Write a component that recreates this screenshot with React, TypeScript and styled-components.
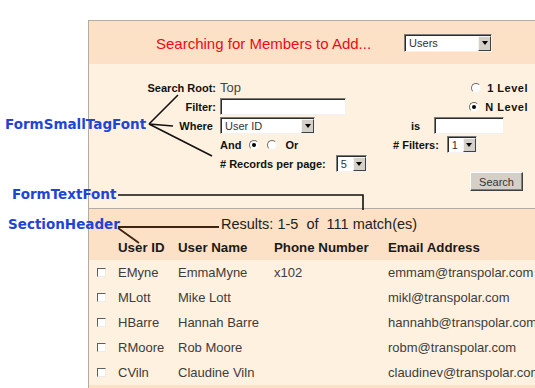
import styled, { createGlobalStyle } from 'styled-components'

const GlobalStyle = createGlobalStyle`
  html, body {
    margin: 0;
    padding: 0;
    background: #fff;
  }
  body {
    font-family: 'Liberation Sans', Arial, sans-serif;
  }
`

const Page = styled.div`
  position: relative;
  width: 535px;
  height: 388px;
  overflow: hidden;
  box-sizing: border-box;
  padding: 20px 0 0 88px;
`

const Panel = styled.div`
  width: 470px;
  border-top: 1px solid #b3aca4;
  border-left: 1px solid #b3aca4;
  background: #fff1df;
`

const TitleBar = styled.div`
  height: 43px;
  display: flex;
  align-items: center;
  gap: 33px;
  padding-left: 67px;
  background: #fde1c6;
`

const Title = styled.span`
  font-size: 15px;
  line-height: 18px;
  color: #ee0a14;
  padding-top: 2px;
`

const FormArea = styled.div`
  display: grid;
  grid-template-columns: 127px 166px 138px;
  grid-auto-rows: 17px;
  column-gap: 4px;
  row-gap: 2px;
  padding: 15px 0 17px;
  border-bottom: 1px solid #b3aca4;
`

const Label = styled.span`
  display: flex;
  align-items: center;
  justify-content: flex-end;
  font-size: 11px;
  font-weight: bold;
  color: #111;
  white-space: pre;
`

const Tag = styled.span<{ $spaced?: boolean }>`
  font-size: 11px;
  font-weight: bold;
  color: #111;
  letter-spacing: ${({ $spaced }) => ($spaced ? '0.5px' : '0')};
  white-space: nowrap;
`

const Cell = styled.div<{ $gap?: number; $col?: number }>`
  display: flex;
  align-items: center;
  gap: ${({ $gap }) => $gap ?? 0}px;
  grid-column: ${({ $col }) => $col ?? 'auto'};
`

const Side = styled.div<{ $indent?: number; $gap?: number; $end?: boolean; $row?: number }>`
  grid-column: 3;
  grid-row: ${({ $row }) => $row ?? 'auto'};
  display: flex;
  align-items: center;
  justify-content: ${({ $end }) => ($end ? 'flex-end' : 'flex-start')};
  gap: ${({ $gap }) => $gap ?? 6}px;
  padding-left: ${({ $indent }) => $indent ?? 0}px;
`

const Plain = styled.span`
  font-size: 13px;
  color: #444;
`

const TextBox = styled.div<{ $w: number }>`
  width: ${({ $w }) => $w}px;
  height: 17px;
  box-sizing: border-box;
  background: #fff;
  border: 1px solid;
  border-color: #7c7c7c #f2f2f2 #f2f2f2 #7c7c7c;
  box-shadow: inset 1px 1px 0 #2c2c2c;
`

const SelectBox = styled.div<{ $w: number; $h?: number }>`
  width: ${({ $w }) => $w}px;
  height: ${({ $h }) => $h ?? 17}px;
  box-sizing: border-box;
  display: flex;
  padding: 1px 0 0 1px;
  background: #fff;
  border: 1px solid;
  border-color: #7c7c7c #f2f2f2 #f2f2f2 #7c7c7c;
  box-shadow: inset 1px 1px 0 #2c2c2c;
`

const SelectValue = styled.span`
  flex: 1;
  display: flex;
  align-items: center;
  padding-left: 3px;
  font-size: 11px;
  color: #333;
`

const DropButton = styled.span`
  width: 13px;
  box-sizing: border-box;
  display: flex;
  align-items: center;
  justify-content: center;
  background: #d4d0c8;
  border: 1px solid;
  border-color: #f4f4f4 #404040 #404040 #f4f4f4;

  &::after {
    content: '';
    border-left: 3.5px solid transparent;
    border-right: 3.5px solid transparent;
    border-top: 4px solid #000;
  }
`

const Radio = styled.span<{ $checked?: boolean }>`
  width: 10px;
  height: 10px;
  box-sizing: border-box;
  border-radius: 50%;
  background: #fff;
  border: 1px solid;
  border-color: #6e6e6e #f4f4f4 #f4f4f4 #6e6e6e;
  display: flex;
  align-items: center;
  justify-content: center;
  flex-shrink: 0;

  &::after {
    content: '';
    width: 4px;
    height: 4px;
    border-radius: 50%;
    background: ${({ $checked }) => ($checked ? '#000' : 'transparent')};
  }
`

const SearchButton = styled.button`
  width: 53px;
  height: 19px;
  margin: -2px 5px 0 0;
  padding: 0;
  background: #d4d0c8;
  border: 1px solid;
  border-color: #fff #404040 #404040 #fff;
  box-shadow: inset -1px -1px 0 #808080;
  font-family: 'Liberation Sans', Arial, sans-serif;
  font-size: 11px;
  color: #333;
`

const ResultsHead = styled.div`
  background: #fde1c6;
  padding: 7px 0 5px;
`

const Summary = styled.div`
  padding-left: 132px;
  font-size: 14.5px;
  line-height: 17px;
  color: #222;
  white-space: pre;
`

const Row = styled.div<{ $head?: boolean }>`
  display: grid;
  grid-template-columns: 21px 60px 96px 114px 1fr;
  align-items: center;
  padding-left: 8px;
  height: ${({ $head }) => ($head ? 16 : 25)}px;
  margin-top: ${({ $head }) => ($head ? 6 : 0)}px;
  font-size: ${({ $head }) => ($head ? 13.3 : 13)}px;
  font-weight: ${({ $head }) => ($head ? 'bold' : 'normal')};
  color: ${({ $head }) => ($head ? '#1a1a1a' : '#3c3c3c')};
  white-space: nowrap;
`

const Check = styled.span`
  width: 9px;
  height: 9px;
  box-sizing: border-box;
  background: #fff;
  border: 1px solid;
  border-color: #5e5e5e #ececec #ececec #5e5e5e;
`

const Footer = styled.div`
  height: 12px;
  background: #fde1c6;
`

const Callout = styled.div<{ $x: number; $y: number }>`
  position: absolute;
  left: ${({ $x }) => $x}px;
  top: ${({ $y }) => $y}px;
  font-family: 'DejaVu Sans', Verdana, sans-serif;
  font-weight: bold;
  font-size: 13.5px;
  line-height: 16px;
  color: #1f45d6;
  white-space: nowrap;
`

const Leaders = styled.svg`
  position: absolute;
  left: 0;
  top: 0;
  pointer-events: none;
`

type Member = { id: string; name: string; phone: string; email: string }

const members: Member[] = [
  { id: 'EMyne', name: 'EmmaMyne', phone: 'x102', email: 'emmam@transpolar.com' },
  { id: 'MLott', name: 'Mike Lott', phone: '', email: 'mikl@transpolar.com' },
  { id: 'HBarre', name: 'Hannah Barre', phone: '', email: 'hannahb@transpolar.com' },
  { id: 'RMoore', name: 'Rob Moore', phone: '', email: 'robm@transpolar.com' },
  { id: 'CViln', name: 'Claudine Viln', phone: '', email: 'claudinev@transpolar.com' },
]

function Select({ value, w, h }: { value: string; w: number; h?: number }) {
  return (
    <SelectBox $w={w} $h={h}>
      <SelectValue>{value}</SelectValue>
      <DropButton />
    </SelectBox>
  )
}

export default function App() {
  return (
    <>
      <GlobalStyle />
      <Page>
        <Panel>
          <TitleBar>
            <Title>Searching for Members to Add...</Title>
            <Select value='Users' w={88} h={18} />
          </TitleBar>

          <FormArea>
            <Label>Search Root:</Label>
            <Cell>
              <Plain>Top</Plain>
            </Cell>
            <Side $end>
              <Radio />
              <Tag $spaced>1 Level</Tag>
            </Side>

            <Label>Filter:</Label>
            <Cell>
              <TextBox $w={126} />
            </Cell>
            <Side $end>
              <Radio $checked />
              <Tag $spaced>N Level</Tag>
            </Side>

            <Label>{'Where\u00a0'}</Label>
            <Cell>
              <Select value='User ID' w={95} />
            </Cell>
            <Side $indent={21} $gap={14}>
              <Tag>is</Tag>
              <TextBox $w={70} />
            </Side>

            <Cell $col={2} $gap={8}>
              <Tag>And</Tag>
              <Radio $checked />
              <Radio />
              <Tag>Or</Tag>
            </Cell>
            <Side $indent={3} $gap={8}>
              <Tag># Filters:</Tag>
              <Select value='1' w={30} />
            </Side>

            <Cell $col={2} $gap={10}>
              <Tag># Records per page:</Tag>
              <Select value='5' w={31} />
            </Cell>

            <Side $end $row={6}>
              <SearchButton>Search</SearchButton>
            </Side>
          </FormArea>

          <ResultsHead>
            <Summary>{'Results: 1-5  of  111 match(es)'}</Summary>
            <Row $head>
              <span />
              <span>User ID</span>
              <span>User Name</span>
              <span>Phone Number</span>
              <span>Email Address</span>
            </Row>
          </ResultsHead>

          {members.map((m) => (
            <Row key={m.id}>
              <Check />
              <span>{m.id}</span>
              <span>{m.name}</span>
              <span>{m.phone}</span>
              <span>{m.email}</span>
            </Row>
          ))}
          <Footer />
        </Panel>

        <Callout $x={5} $y={116}>FormSmallTagFont</Callout>
        <Callout $x={12} $y={186}>FormTextFont</Callout>
        <Callout $x={8} $y={216}>SectionHeader</Callout>

        <Leaders width='535' height='388' viewBox='0 0 535 388'>
          <g stroke='#111' strokeWidth='1.6' fill='none'>
            <path d='M149 124 L178 95' />
            <path d='M149 124 L173 126' />
            <path d='M149 124 L212 156' />
            <path d='M118 195 H363 V210' />
          </g>
          <g stroke='#3b2412' strokeWidth='1.8' fill='none'>
            <path d='M118 227 H219' />
            <path d='M118 228 L139 243' />
          </g>
        </Leaders>
      </Page>
    </>
  )
}
